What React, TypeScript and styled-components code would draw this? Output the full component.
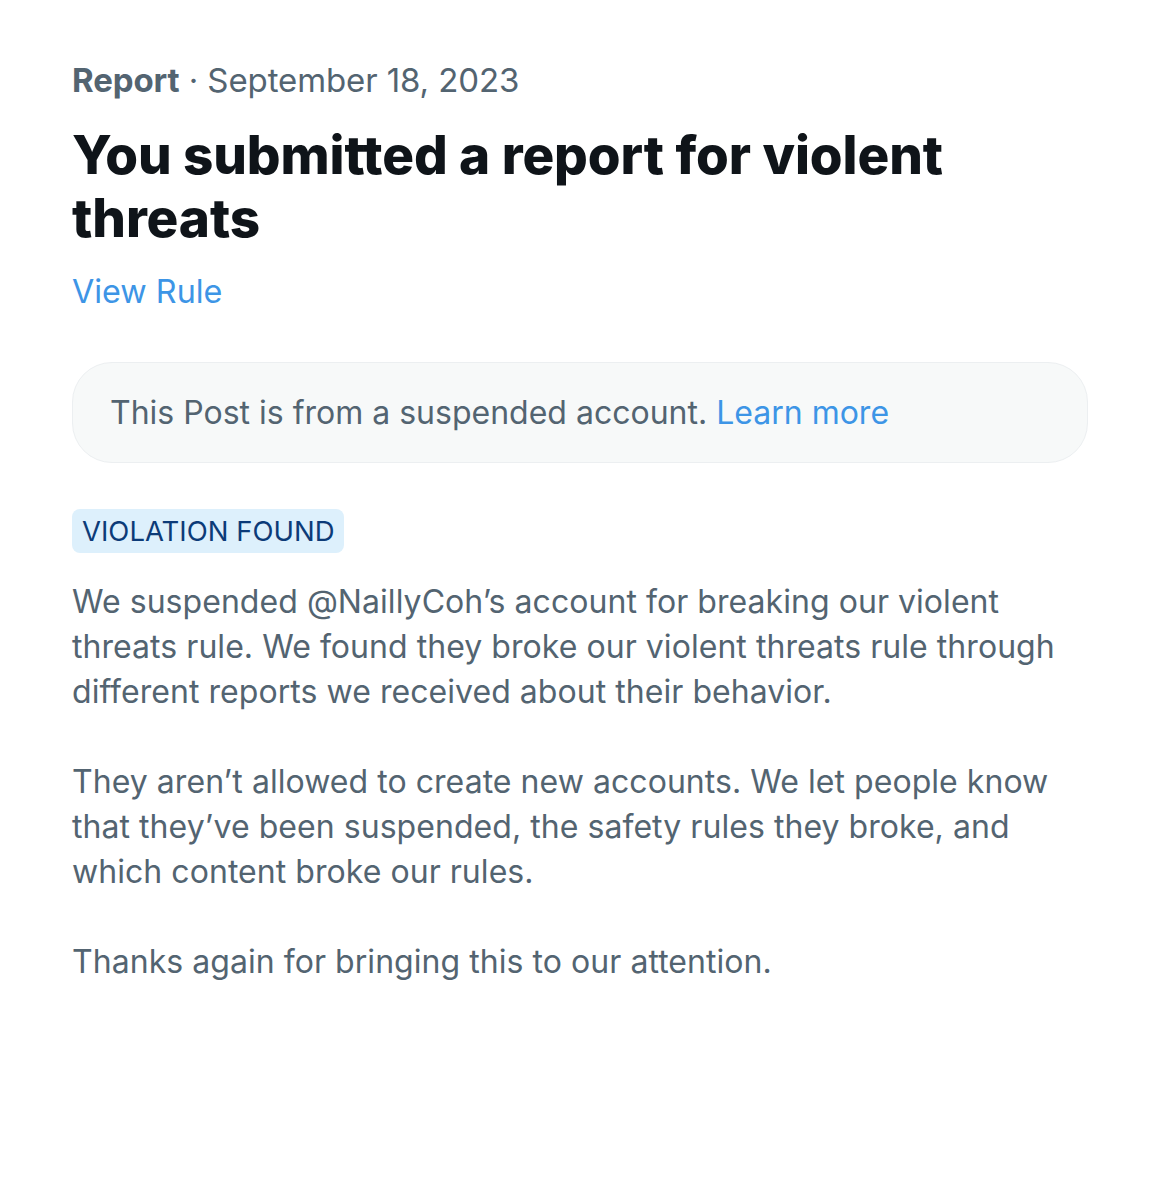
import React from "react";
import styled, { createGlobalStyle } from "styled-components";

const Global = createGlobalStyle`
  html, body { margin: 0; padding: 0; background: #ffffff; }
  body { font-family: Inter, "Noto Sans", "Liberation Sans", sans-serif; -webkit-font-smoothing: antialiased; }
`;

const Page = styled.div`
  width: 1160px;
  height: 1200px;
  box-sizing: border-box;
  padding: 60px 72px 0 72px;
  background: #ffffff;
  display: flex;
  flex-direction: column;
  align-items: flex-start;
`;

const Meta = styled.div`
  font-size: 33px;
  line-height: 40px;
  color: #536471;
  letter-spacing: -0.1px;
`;

const MetaStrong = styled.span`
  font-weight: 700;
`;

const Title = styled.h1`
  margin: 24px 0 0 0;
  font-size: 53px;
  line-height: 63px;
  font-weight: 800;
  color: #0f1419;
  letter-spacing: -0.1px;
`;

const Link = styled.a`
  color: #3d95e6;
  text-decoration: none;
`;

const RuleLink = styled(Link)`
  margin-top: 22px;
  font-size: 32.3px;
  line-height: 40px;
`;

const Notice = styled.div`
  margin-top: 50px;
  width: 1016px;
  height: 101px;
  box-sizing: border-box;
  padding: 0 37px;
  display: flex;
  align-items: center;
  background: #f7f9f9;
  border: 1.5px solid #eceff1;
  border-radius: 40px;
  font-size: 32px;
  line-height: 40px;
  color: #536471;
`;

const Badge = styled.div`
  margin-top: 46px;
  height: 44px;
  box-sizing: border-box;
  padding: 0 10px;
  display: flex;
  align-items: center;
  background: #ddf0fc;
  border-radius: 8px;
  color: #0c3b78;
  font-size: 27.5px;
`;

const Paragraph = styled.p<{ $first?: boolean }>`
  margin: ${(p) => (p.$first ? "26px" : "45px")} 0 0 0;
  font-size: 32px;
  line-height: 45px;
  color: #536471;
  letter-spacing: 0.05px;
  white-space: nowrap;
`;

export default function App() {
  return (
    <>
      <Global />
      <Page>
        <Meta>
          <MetaStrong>Report</MetaStrong> · September 18, 2023
        </Meta>
        <Title>
          You submitted a report for violent
          <br />
          threats
        </Title>
        <RuleLink href="#">View Rule</RuleLink>
        <Notice>
          <span>
            This Post is from a suspended account. <Link href="#">Learn more</Link>
          </span>
        </Notice>
        <Badge>VIOLATION FOUND</Badge>
        <Paragraph $first>
          We suspended @NaillyCoh’s account for breaking our violent
          <br />
          threats rule. We found they broke our violent threats rule through
          <br />
          different reports we received about their behavior.
        </Paragraph>
        <Paragraph>
          They aren’t allowed to create new accounts. We let people know
          <br />
          that they’ve been suspended, the safety rules they broke, and
          <br />
          which content broke our rules.
        </Paragraph>
        <Paragraph>Thanks again for bringing this to our attention.</Paragraph>
      </Page>
    </>
  );
}
